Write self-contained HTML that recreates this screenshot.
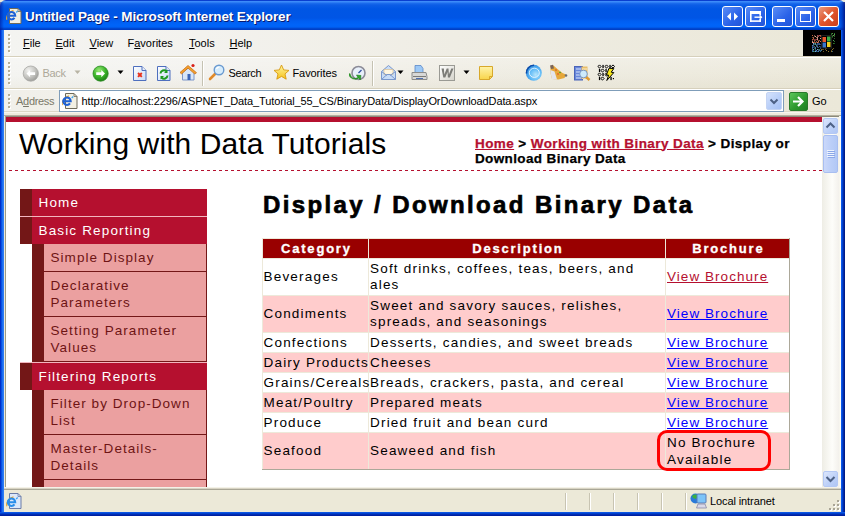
<!DOCTYPE html>
<html><head><meta charset="utf-8">
<style>
*{margin:0;padding:0;box-sizing:border-box}
html,body{width:845px;height:516px;overflow:hidden}
body{position:relative;background:#ECE9D8;font-family:"Liberation Sans",sans-serif;}
.a{position:absolute}
.t{position:absolute;line-height:1;white-space:nowrap}
.v{font-size:13px;letter-spacing:1.2px}
.tah{font-size:11px;color:#000}
</style></head><body>

<!-- ===== Title bar ===== -->
<div class="a" style="left:0;top:0;width:845px;height:30px;border-radius:6px 6px 0 0;background:linear-gradient(#0A3FD0 0px,#0A3FD0 1px,#3D8CFB 1px,#3B8AF8 2px,#1E6EEE 3px,#0C5DE6 5px,#0056E4 9px,#0055E5 18px,#005EF2 21px,#0064F9 25px,#0062F6 27px,#0050DC 28px,#003FC6 29px,#003FC6 30px)"></div>
<div class="a" style="left:839px;top:2px;width:6px;height:28px;background:linear-gradient(90deg,rgba(0,40,180,0),rgba(0,40,170,0.5) 3px,rgba(0,20,130,0.9))"></div>
<div class="a" style="left:0px;top:2px;width:4px;height:28px;background:linear-gradient(90deg,rgba(0,20,150,0.6),rgba(0,40,180,0))"></div>
<!-- title icon -->
<svg class="a" style="left:6px;top:8px" width="20" height="18" viewBox="0 0 20 18">
 <path d="M3.5 0.5h8.5l3 3v12h-11.5z" fill="#F2F0E4" stroke="#6E6A5A" stroke-width="1"/>
 <path d="M12 0.5v3h3" fill="none" stroke="#6E6A5A" stroke-width="0.8"/>
 <path d="M0.9000000000000004 11.7C-0.09999999999999964 8.5 2.5 3.5 7.5 2.3" fill="none" stroke="#E8A830" stroke-width="1.2"/>
 <path d="M2.0999999999999996 7.7H9.2A3.7 3.7 0 1 0 8.5 9.9" fill="none" stroke="#1E62D6" stroke-width="2.1"/>
 <path d="M10.2 4.5l1.5-1.5" stroke="#3AA0F0" stroke-width="1.2"/>
</svg>
<div class="t" style="left:25px;top:10px;font-size:13.5px;font-weight:bold;color:#fff;text-shadow:1px 1px 0 #0A1A6E;letter-spacing:-0.12px">Untitled Page - Microsoft Internet Explorer</div>
<!-- caption buttons -->
<div class="a" style="left:722px;top:6px;width:21px;height:21px;border:1px solid #fff;border-radius:3px;background:linear-gradient(135deg,#5A8CF6,#2A62E8 60%,#2255D8)"></div>
<svg class="a" style="left:722px;top:6px" width="21" height="21"><path d="M5 10.5l4-4v8zM16 10.5l-4-4v8z" fill="#fff"/></svg>
<div class="a" style="left:745px;top:6px;width:21px;height:21px;border:1px solid #fff;border-radius:3px;background:linear-gradient(135deg,#5A8CF6,#2A62E8 60%,#2255D8)"></div>
<svg class="a" style="left:745px;top:6px" width="21" height="21"><g fill="#fff"><rect x="5" y="5" width="11" height="3"/><rect x="5" y="5" width="1.6" height="11"/><rect x="5" y="14.3" width="11" height="1.6"/><rect x="14.4" y="5" width="1.6" height="4.3"/><rect x="14.4" y="13" width="1.6" height="3"/><rect x="9.5" y="10.5" width="6" height="1.4"/><path d="M14.6 8.6L17.4 11.2L14.6 13.8z"/></g></svg>
<div class="a" style="left:772px;top:6px;width:21px;height:21px;border:1px solid #fff;border-radius:3px;background:linear-gradient(135deg,#5A8CF6,#2A62E8 60%,#2255D8)"></div>
<div class="a" style="left:777px;top:19px;width:7.5px;height:3px;background:#fff"></div>
<div class="a" style="left:795px;top:6px;width:21px;height:21px;border:1px solid #fff;border-radius:3px;background:linear-gradient(135deg,#5A8CF6,#2A62E8 60%,#2255D8)"></div>
<div class="a" style="left:800px;top:11px;width:11px;height:11px;border:1px solid #fff;border-top-width:3px"></div>
<div class="a" style="left:818px;top:6px;width:21px;height:21px;border:1px solid #fff;border-radius:3px;background:linear-gradient(135deg,#E89A7E,#E0552C 50%,#C83E1C)"></div>
<svg class="a" style="left:818px;top:6px" width="21" height="21"><path d="M6 6l9 9M15 6l-9 9" stroke="#fff" stroke-width="2.2"/></svg>

<!-- ===== frame borders ===== -->
<div class="a" style="left:0;top:30px;width:4px;height:486px;background:linear-gradient(90deg,#0019B8,#0045DD 1px,#0D5EEA 2px,#2E7CF5 3px)"></div>
<div class="a" style="left:841px;top:30px;width:4px;height:486px;background:linear-gradient(90deg,#1462F2,#0050E4 1px,#0032B8 2px,#00147A 4px)"></div>
<div class="a" style="left:0;top:512px;width:845px;height:4px;background:linear-gradient(#1664EC,#0048DA 1px,#0038C0 2px,#0020A0 3px)"></div>

<!-- ===== Menu bar ===== -->
<div class="a" style="left:4px;top:30px;width:799px;height:26px;background:linear-gradient(90deg,#F4F4F1 0px,#F3F2EE 200px,#EFEDE4 450px,#EBE8D9 799px)"></div>
<div class="a" style="left:803px;top:30px;width:38px;height:26px;background:#000"></div>
<svg class="a" style="left:803px;top:30px" width="38" height="26" viewBox="0 0 38 26">
<rect x="9" y="5" width="1" height="1" fill="#D07040" opacity="0.92"/><rect x="9" y="7" width="1" height="1" fill="#D07040" opacity="0.55"/><rect x="9" y="9" width="1" height="1" fill="#D07040" opacity="0.89"/><rect x="9" y="10" width="1" height="1" fill="#C05050" opacity="0.53"/><rect x="9" y="11" width="1" height="1" fill="#E0C0A0" opacity="0.80"/><rect x="9" y="12" width="1" height="1" fill="#F0A0A0" opacity="0.98"/><rect x="9" y="15" width="1" height="1" fill="#5080D0" opacity="0.91"/><rect x="9" y="16" width="1" height="1" fill="#5080D0" opacity="0.55"/><rect x="9" y="17" width="1" height="1" fill="#5080D0" opacity="0.88"/><rect x="9" y="18" width="1" height="1" fill="#3060A0" opacity="0.91"/><rect x="9" y="19" width="1" height="1" fill="#50B080" opacity="0.61"/><rect x="9" y="20" width="1" height="1" fill="#5080D0" opacity="0.70"/><rect x="9" y="21" width="1" height="1" fill="#3060A0" opacity="1.00"/><rect x="10" y="7" width="1" height="1" fill="#E08060" opacity="0.73"/><rect x="10" y="8" width="1" height="1" fill="#D07040" opacity="0.87"/><rect x="10" y="9" width="1" height="1" fill="#C05050" opacity="0.66"/><rect x="10" y="12" width="1" height="1" fill="#E08060" opacity="0.96"/><rect x="10" y="13" width="1" height="1" fill="#80B0E0" opacity="0.99"/><rect x="10" y="14" width="1" height="1" fill="#5080D0" opacity="0.76"/><rect x="10" y="15" width="1" height="1" fill="#50B080" opacity="0.60"/><rect x="10" y="16" width="1" height="1" fill="#6070C0" opacity="0.46"/><rect x="10" y="17" width="1" height="1" fill="#5080D0" opacity="0.52"/><rect x="10" y="19" width="1" height="1" fill="#80B0E0" opacity="0.89"/><rect x="10" y="20" width="1" height="1" fill="#3060A0" opacity="0.55"/><rect x="10" y="21" width="1" height="1" fill="#50B080" opacity="0.87"/><rect x="11" y="5" width="1" height="1" fill="#F0A0A0" opacity="0.51"/><rect x="11" y="6" width="1" height="1" fill="#E08060" opacity="0.45"/><rect x="11" y="9" width="1" height="1" fill="#D06070" opacity="0.57"/><rect x="11" y="10" width="1" height="1" fill="#D07040" opacity="0.80"/><rect x="11" y="11" width="1" height="1" fill="#E08060" opacity="0.57"/><rect x="11" y="12" width="1" height="1" fill="#D07040" opacity="0.63"/><rect x="11" y="13" width="1" height="1" fill="#5080D0" opacity="0.49"/><rect x="11" y="14" width="1" height="1" fill="#50B080" opacity="0.58"/><rect x="11" y="16" width="1" height="1" fill="#80B0E0" opacity="0.52"/><rect x="11" y="17" width="1" height="1" fill="#3060A0" opacity="0.52"/><rect x="11" y="18" width="1" height="1" fill="#50B080" opacity="0.53"/><rect x="11" y="21" width="1" height="1" fill="#40A0B0" opacity="0.54"/><rect x="12" y="6" width="1" height="1" fill="#E0C0A0" opacity="0.97"/><rect x="12" y="9" width="1" height="1" fill="#D06070" opacity="0.51"/><rect x="12" y="10" width="1" height="1" fill="#C05050" opacity="0.58"/><rect x="12" y="12" width="1" height="1" fill="#D07040" opacity="0.72"/><rect x="12" y="13" width="1" height="1" fill="#50B080" opacity="0.99"/><rect x="12" y="14" width="1" height="1" fill="#80B0E0" opacity="0.76"/><rect x="12" y="17" width="1" height="1" fill="#40A0B0" opacity="0.86"/><rect x="12" y="18" width="1" height="1" fill="#80B0E0" opacity="0.70"/><rect x="12" y="19" width="1" height="1" fill="#40A0B0" opacity="0.61"/><rect x="12" y="20" width="1" height="1" fill="#40A0B0" opacity="0.50"/><rect x="12" y="21" width="1" height="1" fill="#80B0E0" opacity="0.99"/><rect x="13" y="7" width="1" height="1" fill="#E08060" opacity="0.77"/><rect x="13" y="9" width="1" height="1" fill="#C05050" opacity="0.84"/><rect x="13" y="11" width="1" height="1" fill="#E0C0A0" opacity="0.49"/><rect x="13" y="12" width="1" height="1" fill="#C05050" opacity="0.63"/><rect x="13" y="14" width="1" height="1" fill="#3060A0" opacity="0.65"/><rect x="13" y="15" width="1" height="1" fill="#50B080" opacity="0.86"/><rect x="13" y="16" width="1" height="1" fill="#6070C0" opacity="0.64"/><rect x="13" y="20" width="1" height="1" fill="#5080D0" opacity="0.92"/><rect x="13" y="21" width="1" height="1" fill="#3060A0" opacity="0.81"/><rect x="14" y="5" width="1" height="1" fill="#D06070" opacity="0.78"/><rect x="14" y="6" width="1" height="1" fill="#E0C0A0" opacity="0.51"/><rect x="14" y="7" width="1" height="1" fill="#F0A0A0" opacity="0.85"/><rect x="14" y="8" width="1" height="1" fill="#E0C0A0" opacity="0.83"/><rect x="14" y="9" width="1" height="1" fill="#F0A0A0" opacity="0.91"/><rect x="14" y="10" width="1" height="1" fill="#D07040" opacity="0.47"/><rect x="14" y="12" width="1" height="1" fill="#E08060" opacity="0.98"/><rect x="14" y="13" width="1" height="1" fill="#3060A0" opacity="0.81"/><rect x="14" y="14" width="1" height="1" fill="#5080D0" opacity="0.65"/><rect x="14" y="15" width="1" height="1" fill="#3060A0" opacity="0.56"/><rect x="14" y="16" width="1" height="1" fill="#6070C0" opacity="0.81"/><rect x="14" y="17" width="1" height="1" fill="#40A0B0" opacity="0.63"/><rect x="14" y="19" width="1" height="1" fill="#80B0E0" opacity="0.89"/><rect x="14" y="21" width="1" height="1" fill="#40A0B0" opacity="0.66"/><rect x="15" y="5" width="1" height="1" fill="#C05050" opacity="0.57"/><rect x="15" y="6" width="1" height="1" fill="#C05050" opacity="0.91"/><rect x="15" y="10" width="1" height="1" fill="#E08060" opacity="0.51"/><rect x="15" y="11" width="1" height="1" fill="#E08060" opacity="0.91"/><rect x="15" y="12" width="1" height="1" fill="#D07040" opacity="0.72"/><rect x="15" y="13" width="1" height="1" fill="#3060A0" opacity="0.70"/><rect x="15" y="14" width="1" height="1" fill="#5080D0" opacity="0.60"/><rect x="15" y="17" width="1" height="1" fill="#6070C0" opacity="0.62"/><rect x="15" y="19" width="1" height="1" fill="#40A0B0" opacity="0.67"/><rect x="15" y="20" width="1" height="1" fill="#6070C0" opacity="0.58"/><rect x="15" y="21" width="1" height="1" fill="#5080D0" opacity="0.99"/><rect x="16" y="5" width="1" height="1" fill="#D06070" opacity="0.80"/><rect x="16" y="10" width="1" height="1" fill="#F0A0A0" opacity="0.59"/><rect x="16" y="13" width="1" height="1" fill="#5080D0" opacity="0.55"/><rect x="16" y="14" width="1" height="1" fill="#6070C0" opacity="0.75"/><rect x="16" y="16" width="1" height="1" fill="#40A0B0" opacity="0.67"/><rect x="16" y="19" width="1" height="1" fill="#50B080" opacity="0.66"/><rect x="16" y="20" width="1" height="1" fill="#40A0B0" opacity="0.79"/><rect x="17" y="5" width="1" height="1" fill="#D07040" opacity="0.81"/><rect x="17" y="6" width="1" height="1" fill="#C05050" opacity="0.71"/><rect x="17" y="8" width="1" height="1" fill="#E0C0A0" opacity="0.93"/><rect x="17" y="11" width="1" height="1" fill="#E08060" opacity="0.94"/><rect x="17" y="14" width="1" height="1" fill="#6070C0" opacity="0.59"/><rect x="17" y="16" width="1" height="1" fill="#3060A0" opacity="0.50"/><rect x="17" y="17" width="1" height="1" fill="#3060A0" opacity="0.68"/><rect x="17" y="18" width="1" height="1" fill="#5080D0" opacity="0.57"/><rect x="17" y="20" width="1" height="1" fill="#5080D0" opacity="0.55"/><rect x="17" y="21" width="1" height="1" fill="#40A0B0" opacity="0.71"/><rect x="27" y="7" width="1" height="1" fill="#80C060" opacity="0.69"/><rect x="27" y="10" width="1" height="1" fill="#308830" opacity="0.82"/><rect x="27" y="12" width="1" height="1" fill="#308830" opacity="0.56"/><rect x="27" y="13" width="1" height="1" fill="#60C060" opacity="0.55"/><rect x="28" y="3" width="1" height="1" fill="#308830" opacity="0.69"/><rect x="28" y="4" width="1" height="1" fill="#40B040" opacity="0.65"/><rect x="28" y="6" width="1" height="1" fill="#40B040" opacity="0.66"/><rect x="28" y="7" width="1" height="1" fill="#40B040" opacity="0.65"/><rect x="28" y="9" width="1" height="1" fill="#80C060" opacity="0.61"/><rect x="28" y="12" width="1" height="1" fill="#80C060" opacity="0.65"/><rect x="28" y="13" width="1" height="1" fill="#80C060" opacity="0.66"/><rect x="29" y="3" width="1" height="1" fill="#80C060" opacity="0.71"/><rect x="29" y="5" width="1" height="1" fill="#40B040" opacity="0.42"/><rect x="29" y="6" width="1" height="1" fill="#40B040" opacity="0.74"/><rect x="29" y="7" width="1" height="1" fill="#308830" opacity="0.52"/><rect x="30" y="5" width="1" height="1" fill="#80C060" opacity="0.81"/><rect x="30" y="10" width="1" height="1" fill="#60C060" opacity="0.83"/><rect x="30" y="13" width="1" height="1" fill="#308830" opacity="0.85"/><rect x="31" y="3" width="1" height="1" fill="#308830" opacity="0.85"/><rect x="31" y="4" width="1" height="1" fill="#60C060" opacity="0.84"/><rect x="31" y="5" width="1" height="1" fill="#60C060" opacity="0.47"/><rect x="31" y="6" width="1" height="1" fill="#80C060" opacity="0.45"/><rect x="31" y="8" width="1" height="1" fill="#60C060" opacity="0.50"/><rect x="31" y="11" width="1" height="1" fill="#308830" opacity="0.86"/><rect x="31" y="13" width="1" height="1" fill="#308830" opacity="0.65"/><rect x="18" y="19" width="1" height="1" fill="#C0A040" opacity="0.64"/><rect x="18" y="20" width="1" height="1" fill="#60A0C0" opacity="0.71"/><rect x="19" y="19" width="1" height="1" fill="#C0A040" opacity="0.50"/><rect x="20" y="19" width="1" height="1" fill="#C0A040" opacity="0.47"/><rect x="20" y="21" width="1" height="1" fill="#C0A040" opacity="0.56"/><rect x="22" y="18" width="1" height="1" fill="#60A0C0" opacity="0.42"/><rect x="22" y="19" width="1" height="1" fill="#A08030" opacity="0.63"/><rect x="23" y="18" width="1" height="1" fill="#C0A040" opacity="0.45"/><rect x="23" y="20" width="1" height="1" fill="#C0A040" opacity="0.80"/><rect x="25" y="21" width="1" height="1" fill="#C0A040" opacity="0.77"/><rect x="28" y="20" width="1" height="1" fill="#A08030" opacity="0.55"/><rect x="28" y="21" width="1" height="1" fill="#A08030" opacity="0.90"/><rect x="29" y="19" width="1" height="1" fill="#A08030" opacity="0.87"/><rect x="29" y="21" width="1" height="1" fill="#60A0C0" opacity="0.60"/><rect x="30" y="18" width="1" height="1" fill="#C0A040" opacity="0.59"/>
 <rect x="18.5" y="5.5" width="10" height="12.5" fill="#000" stroke="#202020" stroke-width="1"/>
 <rect x="19.5" y="7" width="3.5" height="5" fill="#E8582A"/>
 <rect x="24" y="6.5" width="3.5" height="5" fill="#3CB04A"/>
 <rect x="19.5" y="12.5" width="3.5" height="5" fill="#3A78D0"/>
 <rect x="24" y="12" width="3.5" height="5" fill="#F0D020"/>
</svg>
<div class="a" style="left:4px;top:56px;width:837px;height:1px;background:#D6D0BC"></div>
<div class="a" style="left:4px;top:57px;width:837px;height:1px;background:#FFFFFF;z-index:1"></div>


<!-- ===== Toolbar ===== -->
<div class="a" style="left:4px;top:57px;width:837px;height:31px;background:linear-gradient(rgba(255,255,255,0.25),rgba(255,255,255,0) 60%,rgba(200,190,160,0.12)),linear-gradient(90deg,#F4F4F1 0px,#F3F2EE 200px,#EFEDE4 450px,#EBE8D9 837px)"></div>
<div class="a" style="left:4px;top:88px;width:837px;height:1px;background:#D6D0BC"></div>
<div class="a" style="left:4px;top:89px;width:837px;height:1px;background:#FFFFFF;z-index:1"></div>

<!-- ===== Address bar ===== -->
<div class="a" style="left:4px;top:89px;width:837px;height:22px;background:linear-gradient(90deg,#F1F0EA 0px,#F0EFE8 200px,#EEECE2 450px,#EBE8D9 837px)"></div>
<div class="a" style="left:4px;top:111px;width:837px;height:1px;background:#DCD7C6"></div>
<div class="a" style="left:4px;top:112px;width:837px;height:1px;background:#F7F5EE"></div>
<div class="a" style="left:4px;top:113px;width:837px;height:2px;background:#EEEBDD"></div>
<div class="a" style="left:4px;top:115px;width:837px;height:1px;background:#B4B0A0"></div>

<!-- ===== Page frame ===== -->
<div class="a" style="left:5px;top:116px;width:836px;height:1px;background:#8C8A7A"></div>
<div class="a" style="left:5px;top:116px;width:1px;height:372px;background:#9D9A88"></div>
<div class="a" style="left:6px;top:117px;width:816px;height:370px;background:#fff;overflow:hidden" id="page"></div>
<div class="a" style="left:0;top:0;width:822px;height:487px;overflow:hidden">
<div class="a" style="left:6px;top:117px;width:816px;height:5px;background:#B5102F;"></div>
<div class="t" style="left:19px;top:128.60px;font-size:30px;font-weight:400;color:#000;letter-spacing:0.1px;">Working with Data Tutorials</div>
<div class="t" style="left:475px;top:136.5px;font-size:13.5px;font-weight:700;letter-spacing:0.41px;color:#000;-webkit-text-stroke:0.25px #000"><span style="color:#B5102F;text-decoration:underline;-webkit-text-stroke-color:#B5102F">Home</span> &gt; <span style="color:#B5102F;text-decoration:underline;-webkit-text-stroke-color:#B5102F">Working with Binary Data</span> &gt; Display or</div>
<div class="t" style="left:475px;top:151.57px;font-size:13.5px;font-weight:700;color:#000;letter-spacing:0.37px;-webkit-text-stroke:0.25px #000">Download Binary Data</div>
<div class="a" style="left:9px;top:170px;width:813px;height:1px;background:repeating-linear-gradient(90deg,#B5102F 0 3px,transparent 3px 6px);"></div>
<div class="a" style="left:20px;top:189px;width:12px;height:27px;background:#731717;"></div>
<div class="a" style="left:32px;top:189px;width:175px;height:27px;background:#B5102F;"></div>
<div class="t" style="left:38.5px;top:195.57px;font-size:13.5px;font-weight:400;color:#fff;letter-spacing:1.15px;">Home</div>
<div class="a" style="left:20px;top:216px;width:187px;height:1px;background:#F2B6BE;"></div>
<div class="a" style="left:20px;top:217px;width:12px;height:27px;background:#731717;"></div>
<div class="a" style="left:32px;top:217px;width:175px;height:27px;background:#B5102F;"></div>
<div class="t" style="left:38.5px;top:223.57px;font-size:13.5px;font-weight:400;color:#fff;letter-spacing:1.15px;">Basic Reporting</div>
<div class="a" style="left:32px;top:244px;width:12px;height:28px;background:#731717;"></div>
<div class="a" style="left:44px;top:244px;width:162px;height:27px;background:#EBA0A0;"></div>
<div class="a" style="left:44px;top:271px;width:162px;height:1px;background:#731717;"></div>
<div class="a" style="left:206px;top:244px;width:1px;height:28px;background:#731717;"></div>
<div class="t" style="left:50.5px;top:250.57px;font-size:13.5px;font-weight:400;color:#6E1414;letter-spacing:1.05px;">Simple Display</div>
<div class="a" style="left:32px;top:272px;width:12px;height:45px;background:#731717;"></div>
<div class="a" style="left:44px;top:272px;width:162px;height:44px;background:#EBA0A0;"></div>
<div class="a" style="left:44px;top:316px;width:162px;height:1px;background:#731717;"></div>
<div class="a" style="left:206px;top:272px;width:1px;height:45px;background:#731717;"></div>
<div class="t" style="left:50.5px;top:278.57px;font-size:13.5px;font-weight:400;color:#6E1414;letter-spacing:1.05px;">Declarative</div>
<div class="t" style="left:50.5px;top:295.57px;font-size:13.5px;font-weight:400;color:#6E1414;letter-spacing:1.05px;">Parameters</div>
<div class="a" style="left:32px;top:317px;width:12px;height:45px;background:#731717;"></div>
<div class="a" style="left:44px;top:317px;width:162px;height:44px;background:#EBA0A0;"></div>
<div class="a" style="left:44px;top:361px;width:162px;height:1px;background:#731717;"></div>
<div class="a" style="left:206px;top:317px;width:1px;height:45px;background:#731717;"></div>
<div class="t" style="left:50.5px;top:323.57px;font-size:13.5px;font-weight:400;color:#6E1414;letter-spacing:1.05px;">Setting Parameter</div>
<div class="t" style="left:50.5px;top:340.57px;font-size:13.5px;font-weight:400;color:#6E1414;letter-spacing:1.05px;">Values</div>
<div class="a" style="left:20px;top:362px;width:187px;height:1px;background:#F2B6BE;"></div>
<div class="a" style="left:20px;top:363px;width:12px;height:27px;background:#731717;"></div>
<div class="a" style="left:32px;top:363px;width:175px;height:27px;background:#B5102F;"></div>
<div class="t" style="left:38.5px;top:369.57px;font-size:13.5px;font-weight:400;color:#fff;letter-spacing:1.15px;">Filtering Reports</div>
<div class="a" style="left:32px;top:390px;width:12px;height:45px;background:#731717;"></div>
<div class="a" style="left:44px;top:390px;width:162px;height:44px;background:#EBA0A0;"></div>
<div class="a" style="left:44px;top:434px;width:162px;height:1px;background:#731717;"></div>
<div class="a" style="left:206px;top:390px;width:1px;height:45px;background:#731717;"></div>
<div class="t" style="left:50.5px;top:396.57px;font-size:13.5px;font-weight:400;color:#6E1414;letter-spacing:1.05px;">Filter by Drop-Down</div>
<div class="t" style="left:50.5px;top:413.57px;font-size:13.5px;font-weight:400;color:#6E1414;letter-spacing:1.05px;">List</div>
<div class="a" style="left:32px;top:435px;width:12px;height:45px;background:#731717;"></div>
<div class="a" style="left:44px;top:435px;width:162px;height:44px;background:#EBA0A0;"></div>
<div class="a" style="left:44px;top:479px;width:162px;height:1px;background:#731717;"></div>
<div class="a" style="left:206px;top:435px;width:1px;height:45px;background:#731717;"></div>
<div class="t" style="left:50.5px;top:441.57px;font-size:13.5px;font-weight:400;color:#6E1414;letter-spacing:1.05px;">Master-Details-</div>
<div class="t" style="left:50.5px;top:458.57px;font-size:13.5px;font-weight:400;color:#6E1414;letter-spacing:1.05px;">Details</div>
<div class="a" style="left:32px;top:480px;width:12px;height:45px;background:#731717;"></div>
<div class="a" style="left:44px;top:480px;width:162px;height:44px;background:#EBA0A0;"></div>
<div class="a" style="left:44px;top:524px;width:162px;height:1px;background:#731717;"></div>
<div class="a" style="left:206px;top:480px;width:1px;height:45px;background:#731717;"></div>
<div class="t" style="left:50.5px;top:486.57px;font-size:13.5px;font-weight:400;color:#6E1414;letter-spacing:1.05px;">Master-Details-</div>
<div class="t" style="left:50.5px;top:503.57px;font-size:13.5px;font-weight:400;color:#6E1414;letter-spacing:1.05px;">Details</div>
<div class="t" style="left:263px;top:192.68px;font-size:24px;font-weight:700;color:#000;letter-spacing:2.38px;-webkit-text-stroke:0.7px #000">Display / Download Binary Data</div>
<div class="a" style="left:262px;top:238px;width:528px;height:232px;background:#EDE9DA;"></div>
<div class="a" style="left:263px;top:239px;width:105px;height:19px;background:#990000;"></div>
<div class="a" style="left:369px;top:239px;width:296px;height:19px;background:#990000;"></div>
<div class="a" style="left:666px;top:239px;width:123px;height:19px;background:#990000;"></div>
<div class="a" style="left:263px;top:259px;width:105px;height:36px;background:#fff;"></div>
<div class="a" style="left:369px;top:259px;width:296px;height:36px;background:#fff;"></div>
<div class="a" style="left:666px;top:259px;width:123px;height:36px;background:#fff;"></div>
<div class="a" style="left:263px;top:296px;width:105px;height:36px;background:#FFCCCC;"></div>
<div class="a" style="left:369px;top:296px;width:296px;height:36px;background:#FFCCCC;"></div>
<div class="a" style="left:666px;top:296px;width:123px;height:36px;background:#FFCCCC;"></div>
<div class="a" style="left:263px;top:333px;width:105px;height:19px;background:#fff;"></div>
<div class="a" style="left:369px;top:333px;width:296px;height:19px;background:#fff;"></div>
<div class="a" style="left:666px;top:333px;width:123px;height:19px;background:#fff;"></div>
<div class="a" style="left:263px;top:353px;width:105px;height:19px;background:#FFCCCC;"></div>
<div class="a" style="left:369px;top:353px;width:296px;height:19px;background:#FFCCCC;"></div>
<div class="a" style="left:666px;top:353px;width:123px;height:19px;background:#FFCCCC;"></div>
<div class="a" style="left:263px;top:373px;width:105px;height:19px;background:#fff;"></div>
<div class="a" style="left:369px;top:373px;width:296px;height:19px;background:#fff;"></div>
<div class="a" style="left:666px;top:373px;width:123px;height:19px;background:#fff;"></div>
<div class="a" style="left:263px;top:393px;width:105px;height:19px;background:#FFCCCC;"></div>
<div class="a" style="left:369px;top:393px;width:296px;height:19px;background:#FFCCCC;"></div>
<div class="a" style="left:666px;top:393px;width:123px;height:19px;background:#FFCCCC;"></div>
<div class="a" style="left:263px;top:413px;width:105px;height:19px;background:#fff;"></div>
<div class="a" style="left:369px;top:413px;width:296px;height:19px;background:#fff;"></div>
<div class="a" style="left:666px;top:413px;width:123px;height:19px;background:#fff;"></div>
<div class="a" style="left:263px;top:433px;width:105px;height:36px;background:#FFCCCC;"></div>
<div class="a" style="left:369px;top:433px;width:296px;height:36px;background:#FFCCCC;"></div>
<div class="a" style="left:666px;top:433px;width:123px;height:36px;background:#FFCCCC;"></div>
<div class="a" style="left:789px;top:238px;width:1px;height:232px;background:#ACA899;"></div>
<div class="a" style="left:262px;top:469px;width:528px;height:1px;background:#ACA899;"></div>
<div class="t" style="left:263px;width:105px;text-align:center;top:242.00px;font-size:13px;font-weight:700;color:#fff;letter-spacing:1.8px;text-indent:1.8px;-webkit-text-stroke:0.3px #fff">Category</div>
<div class="t" style="left:369px;width:296px;text-align:center;top:242.00px;font-size:13px;font-weight:700;color:#fff;letter-spacing:1.8px;text-indent:1.8px;-webkit-text-stroke:0.3px #fff">Description</div>
<div class="t" style="left:666px;width:123px;text-align:center;top:242.00px;font-size:13px;font-weight:700;color:#fff;letter-spacing:1.8px;text-indent:1.8px;-webkit-text-stroke:0.3px #fff">Brochure</div>
<div class="t" style="left:263.5px;top:270.07px;font-size:13.5px;font-weight:400;color:#000;letter-spacing:1.2px;">Beverages</div>
<div class="t" style="left:370px;top:261.57px;font-size:13.5px;font-weight:400;color:#000;letter-spacing:1.2px;">Soft drinks, coffees, teas, beers, and</div>
<div class="t" style="left:370px;top:277.57px;font-size:13.5px;font-weight:400;color:#000;letter-spacing:1.2px;">ales</div>
<div class="t" style="left:667px;top:270.07px;font-size:13.5px;font-weight:400;color:#B5102F;letter-spacing:1.05px;text-decoration:underline">View Brochure</div>
<div class="t" style="left:263.5px;top:307.07px;font-size:13.5px;font-weight:400;color:#000;letter-spacing:1.2px;">Condiments</div>
<div class="t" style="left:370px;top:298.57px;font-size:13.5px;font-weight:400;color:#000;letter-spacing:1.2px;">Sweet and savory sauces, relishes,</div>
<div class="t" style="left:370px;top:314.57px;font-size:13.5px;font-weight:400;color:#000;letter-spacing:1.2px;">spreads, and seasonings</div>
<div class="t" style="left:667px;top:307.07px;font-size:13.5px;font-weight:400;color:#0000FF;letter-spacing:1.05px;text-decoration:underline">View Brochure</div>
<div class="t" style="left:263.5px;top:335.57px;font-size:13.5px;font-weight:400;color:#000;letter-spacing:1.2px;">Confections</div>
<div class="t" style="left:370px;top:335.57px;font-size:13.5px;font-weight:400;color:#000;letter-spacing:1.2px;">Desserts, candies, and sweet breads</div>
<div class="t" style="left:667px;top:335.57px;font-size:13.5px;font-weight:400;color:#0000FF;letter-spacing:1.05px;text-decoration:underline">View Brochure</div>
<div class="t" style="left:263.5px;top:355.57px;font-size:13.5px;font-weight:400;color:#000;letter-spacing:1.2px;">Dairy Products</div>
<div class="t" style="left:370px;top:355.57px;font-size:13.5px;font-weight:400;color:#000;letter-spacing:1.2px;">Cheeses</div>
<div class="t" style="left:667px;top:355.57px;font-size:13.5px;font-weight:400;color:#0000FF;letter-spacing:1.05px;text-decoration:underline">View Brochure</div>
<div class="t" style="left:263.5px;top:375.57px;font-size:13.5px;font-weight:400;color:#000;letter-spacing:1.2px;">Grains/Cereals</div>
<div class="t" style="left:370px;top:375.57px;font-size:13.5px;font-weight:400;color:#000;letter-spacing:1.2px;">Breads, crackers, pasta, and cereal</div>
<div class="t" style="left:667px;top:375.57px;font-size:13.5px;font-weight:400;color:#0000FF;letter-spacing:1.05px;text-decoration:underline">View Brochure</div>
<div class="t" style="left:263.5px;top:395.57px;font-size:13.5px;font-weight:400;color:#000;letter-spacing:1.2px;">Meat/Poultry</div>
<div class="t" style="left:370px;top:395.57px;font-size:13.5px;font-weight:400;color:#000;letter-spacing:1.2px;">Prepared meats</div>
<div class="t" style="left:667px;top:395.57px;font-size:13.5px;font-weight:400;color:#0000FF;letter-spacing:1.05px;text-decoration:underline">View Brochure</div>
<div class="t" style="left:263.5px;top:415.57px;font-size:13.5px;font-weight:400;color:#000;letter-spacing:1.2px;">Produce</div>
<div class="t" style="left:370px;top:415.57px;font-size:13.5px;font-weight:400;color:#000;letter-spacing:1.2px;">Dried fruit and bean curd</div>
<div class="t" style="left:667px;top:415.57px;font-size:13.5px;font-weight:400;color:#0000FF;letter-spacing:1.05px;text-decoration:underline">View Brochure</div>
<div class="t" style="left:263.5px;top:444.07px;font-size:13.5px;font-weight:400;color:#000;letter-spacing:1.2px;">Seafood</div>
<div class="t" style="left:370px;top:444.07px;font-size:13.5px;font-weight:400;color:#000;letter-spacing:1.2px;">Seaweed and fish</div>
<div class="t" style="left:667px;top:435.57px;font-size:13.5px;font-weight:400;color:#000;letter-spacing:1.2px;">No Brochure</div>
<div class="t" style="left:667px;top:452.57px;font-size:13.5px;font-weight:400;color:#000;letter-spacing:1.2px;">Available</div>
<div class="a" style="left:657px;top:430px;width:114px;height:41px;border:3px solid #FF0000;border-radius:10px"></div>
</div>
<!-- ===== Status bar ===== -->
<div class="a" style="left:4px;top:487px;width:837px;height:1px;background:#F4F2E8"></div>
<div class="a" style="left:4px;top:488px;width:837px;height:1px;background:#D8D4C4"></div>
<div class="a" style="left:4px;top:489px;width:837px;height:1px;background:#A9A696"></div>
<div class="a" style="left:4px;top:490px;width:837px;height:22px;background:#ECE9D8"></div>


<!-- grips -->
<svg class="a" style="left:8px;top:34px" width="4" height="20"><g fill="#FFFFFF"><rect x="1" y="1" width="2" height="2"/><rect x="1" y="5" width="2" height="2"/><rect x="1" y="9" width="2" height="2"/><rect x="1" y="13" width="2" height="2"/><rect x="1" y="17" width="2" height="2"/></g><g fill="#B5AE96"><rect x="0" y="0" width="2" height="2"/><rect x="0" y="4" width="2" height="2"/><rect x="0" y="8" width="2" height="2"/><rect x="0" y="12" width="2" height="2"/><rect x="0" y="16" width="2" height="2"/></g></svg>
<svg class="a" style="left:8px;top:62px" width="4" height="24"><g fill="#FFFFFF"><rect x="1" y="1" width="2" height="2"/><rect x="1" y="5" width="2" height="2"/><rect x="1" y="9" width="2" height="2"/><rect x="1" y="13" width="2" height="2"/><rect x="1" y="17" width="2" height="2"/><rect x="1" y="21" width="2" height="2"/></g><g fill="#B5AE96"><rect x="0" y="0" width="2" height="2"/><rect x="0" y="4" width="2" height="2"/><rect x="0" y="8" width="2" height="2"/><rect x="0" y="12" width="2" height="2"/><rect x="0" y="16" width="2" height="2"/><rect x="0" y="20" width="2" height="2"/></g></svg>
<svg class="a" style="left:8px;top:94px" width="4" height="16"><g fill="#FFFFFF"><rect x="1" y="1" width="2" height="2"/><rect x="1" y="5" width="2" height="2"/><rect x="1" y="9" width="2" height="2"/><rect x="1" y="13" width="2" height="2"/></g><g fill="#B5AE96"><rect x="0" y="0" width="2" height="2"/><rect x="0" y="4" width="2" height="2"/><rect x="0" y="8" width="2" height="2"/><rect x="0" y="12" width="2" height="2"/></g></svg>

<!-- menu -->
<div class="t tah" style="left:23px;top:37.5px"><u>F</u>ile</div>
<div class="t tah" style="left:55.5px;top:37.5px"><u>E</u>dit</div>
<div class="t tah" style="left:89.5px;top:37.5px"><u>V</u>iew</div>
<div class="t tah" style="left:127.5px;top:37.5px">F<u>a</u>vorites</div>
<div class="t tah" style="left:189px;top:37.5px"><u>T</u>ools</div>
<div class="t tah" style="left:229.5px;top:37.5px"><u>H</u>elp</div>

<!-- toolbar -->
<svg class="a" style="left:22px;top:65px" width="18" height="18" viewBox="0 0 18 18">
 <defs><radialGradient id="gb" cx="35%" cy="30%" r="75%"><stop offset="0" stop-color="#F2F2F0"/><stop offset="0.6" stop-color="#C4C4C0"/><stop offset="1" stop-color="#9A9A96"/></radialGradient></defs>
 <circle cx="8.8" cy="8.6" r="7.6" fill="url(#gb)" stroke="#A8A8A4" stroke-width="0.8"/>
 <path d="M4.5 8.6l3.6-3.6v2.3h5v2.6h-5v2.3z" fill="#fff"/>
</svg>
<div class="t tah" style="left:42.5px;top:67.7px;color:#ACA899;letter-spacing:-0.3px">Back</div>
<svg class="a" style="left:74px;top:70px" width="8" height="5"><path d="M0.5 0.5h6l-3 3.5z" fill="#B8B4A4"/></svg>
<svg class="a" style="left:92px;top:65px" width="18" height="18" viewBox="0 0 18 18">
 <defs><radialGradient id="gg" cx="40%" cy="30%" r="75%"><stop offset="0" stop-color="#9CEB7A"/><stop offset="0.55" stop-color="#3BB52A"/><stop offset="1" stop-color="#1A7A14"/></radialGradient></defs>
 <circle cx="8.6" cy="8.6" r="7.6" fill="url(#gg)" stroke="#2B8A22" stroke-width="0.8"/>
 <path d="M13 8.6L9.3 5v2.3H4.2v2.6h5.1v2.3z" fill="#fff"/>
</svg>
<svg class="a" style="left:117px;top:70px" width="8" height="5"><path d="M0.5 0.5h6l-3 3.5z" fill="#000"/></svg>
<!-- stop -->
<svg class="a" style="left:132px;top:65px" width="16" height="17" viewBox="0 0 16 17">
 <defs><linearGradient id="doc" x1="0" y1="0" x2="1" y2="1"><stop offset="0" stop-color="#FFFFFF"/><stop offset="1" stop-color="#C9DAF6"/></linearGradient></defs>
 <path d="M1.5 1.5h8.5l4 4v10H1.5z" fill="url(#doc)" stroke="#4E6FBE" stroke-width="1"/>
 <path d="M10 1.5v4h4" fill="#E8EEF8" stroke="#4E6FBE" stroke-width="1"/>
 <path d="M6 8l3.8 3.8M9.8 8l-3.8 3.8" stroke="#E8321C" stroke-width="1.9"/>
</svg>
<!-- refresh -->
<svg class="a" style="left:156px;top:65px" width="16" height="17" viewBox="0 0 16 17">
 <path d="M1.5 1.5h8.5l4 4v10H1.5z" fill="url(#doc)" stroke="#4E6FBE" stroke-width="1"/>
 <path d="M10 1.5v4h4" fill="#E8EEF8" stroke="#4E6FBE" stroke-width="1"/>
 <path d="M4.5 8.5a3.5 3.5 0 0 1 6-2.2M11.5 10.5a3.5 3.5 0 0 1 -6 2.2" stroke="#1E9A1E" stroke-width="2" fill="none"/>
 <path d="M11.5 4.5v3.5h-3.5zM4.5 14.5v-3.5h3.5z" fill="#1E9A1E"/>
</svg>
<!-- home -->
<svg class="a" style="left:179px;top:63px" width="19" height="19" viewBox="0 0 19 19">
 <path d="M3.5 9.5v7.5h11.5v-8.5l-5-4z" fill="#D8E6F8" stroke="#7D96C8" stroke-width="1"/>
 <path d="M1 9.5l8-7 8.5 7.2-1.6 1.4-6.9-6-6.4 5.8z" fill="#F6A02A" stroke="#C8701A" stroke-width="0.8"/>
 <circle cx="14" cy="2.5" r="1.6" fill="#D8201A"/>
 <rect x="8.5" y="11" width="3" height="6" fill="#3A64B8"/>
</svg>
<div class="a" style="left:202px;top:61px;width:1px;height:25px;background:#C5C2B2"></div>
<div class="a" style="left:203px;top:61px;width:1px;height:25px;background:#FFFFFF"></div>
<!-- search -->
<svg class="a" style="left:208px;top:64px" width="18" height="17" viewBox="0 0 18 17">
 <path d="M2 15l5-5" stroke="#E08A2A" stroke-width="2.6" stroke-linecap="round"/>
 <circle cx="11" cy="6" r="4.8" fill="#D6ECFC" stroke="#6A9AD0" stroke-width="1.4"/>
 <path d="M8.5 5a3 3 0 0 1 3-2" stroke="#fff" stroke-width="1.2" fill="none"/>
</svg>
<div class="t tah" style="left:228.5px;top:67.7px;letter-spacing:-0.35px">Search</div>
<!-- star -->
<svg class="a" style="left:273px;top:64px" width="17" height="17" viewBox="0 0 17 17">
 <defs><linearGradient id="st" x1="0" y1="0" x2="0" y2="1"><stop offset="0" stop-color="#FFF6A0"/><stop offset="1" stop-color="#F6C21A"/></linearGradient></defs>
 <path d="M8.5 1l2.2 4.9 5.3.5-4 3.5 1.2 5.3-4.7-2.8-4.7 2.8 1.2-5.3-4-3.5 5.3-.5z" fill="url(#st)" stroke="#D89A10" stroke-width="0.9" stroke-linejoin="round"/>
</svg>
<div class="t tah" style="left:292.5px;top:67.7px;letter-spacing:-0.1px">Favorites</div>
<!-- history -->
<svg class="a" style="left:349px;top:65px" width="17" height="16" viewBox="0 0 17 16">
 <circle cx="9.5" cy="8" r="6.5" fill="#E8F0FA" stroke="#8C8C98" stroke-width="1.6"/>
 <path d="M9.5 8l3-3" stroke="#3050A0" stroke-width="1.2"/>
 <path d="M11 12.5l-2 0" stroke="#D02020" stroke-width="1"/>
 <path d="M1 8.5a5 5 0 0 0 8 4l-1.5-2.5 4.5 .5-.8 4.5-1.5-2a6.5 6.5 0 0 1-10-3.5z" fill="#2EA82A" stroke="#1A7A1A" stroke-width="0.6"/>
</svg>
<div class="a" style="left:372px;top:61px;width:1px;height:25px;background:#C5C2B2"></div>
<div class="a" style="left:373px;top:61px;width:1px;height:25px;background:#FFFFFF"></div>
<!-- mail -->
<svg class="a" style="left:380px;top:64px" width="17" height="17" viewBox="0 0 17 17">
 <path d="M1.5 7.5l7-6 7 6v8h-14z" fill="#C8DCF6" stroke="#7A98CC" stroke-width="1"/>
 <path d="M4 5.5h9v5h-9z" fill="#FFF6E0" stroke="#D8B880" stroke-width="0.6"/>
 <path d="M1.5 15.5l5.5-5h3l5.5 5M1.5 7.5l5.5 4M15.5 7.5l-5.5 4" fill="none" stroke="#7A98CC" stroke-width="1"/>
</svg>
<svg class="a" style="left:397px;top:70px" width="8" height="5"><path d="M0.5 0.5h6l-3 3.5z" fill="#000"/></svg>
<!-- printer -->
<svg class="a" style="left:411px;top:64px" width="17" height="17" viewBox="0 0 17 17">
 <path d="M4 1.5h6l2 3v4h-8z" fill="#9CC8F6" stroke="#5A88C8" stroke-width="0.8"/>
 <path d="M1 8.5h14l1 4v3H1v-3z" fill="#D8D8D6" stroke="#8C8C8A" stroke-width="1"/>
 <path d="M2 12.5h13" stroke="#7A7A78" stroke-width="1"/>
 <path d="M5 14.5h7" stroke="#5070B0" stroke-width="1"/>
</svg>
<!-- word -->
<svg class="a" style="left:438px;top:64px" width="18" height="18" viewBox="0 0 18 18">
 <defs><linearGradient id="wd" x1="0" y1="0" x2="1" y2="1"><stop offset="0" stop-color="#FFFFFF"/><stop offset="1" stop-color="#D4D2CA"/></linearGradient></defs>
 <rect x="1.5" y="1.5" width="15" height="15" fill="url(#wd)" stroke="#9A9A94" stroke-width="1"/>
 <path d="M3.5 4.5h2.4l.4 6 2.4-6h1.8l.4 6 2.4-6h2.2l-3.6 9h-2l-.4-5.5-2.2 5.5h-2z" fill="#7C7C78"/>
</svg>
<svg class="a" style="left:463px;top:70px" width="8" height="5"><path d="M0.5 0.5h6l-3 3.5z" fill="#000"/></svg>
<!-- sticky -->
<svg class="a" style="left:478px;top:65px" width="16" height="16" viewBox="0 0 16 16">
 <defs><linearGradient id="sn" x1="0" y1="0" x2="0" y2="1"><stop offset="0" stop-color="#FFF3A8"/><stop offset="1" stop-color="#F8D44A"/></linearGradient></defs>
 <path d="M1.5 1.5h13v10l-3 3h-10z" fill="url(#sn)" stroke="#D8A82A" stroke-width="1"/>
 <path d="M14.5 11.5h-3v3" fill="none" stroke="#D8A82A" stroke-width="1"/>
</svg>
<!-- globe -->
<svg class="a" style="left:525px;top:64px" width="18" height="18" viewBox="0 0 18 18">
 <defs><radialGradient id="gl" cx="62%" cy="62%" r="85%"><stop offset="0" stop-color="#B4E4FC"/><stop offset="0.45" stop-color="#5CB8F6"/><stop offset="0.8" stop-color="#2C86DC"/><stop offset="1" stop-color="#145AB4"/></radialGradient></defs>
 <circle cx="8.8" cy="8.8" r="8" fill="url(#gl)"/>
 <path d="M1.5 9.5A7.5 7.5 0 0 1 9 1.3" fill="none" stroke="#0F4CA8" stroke-width="1.6"/>
 <ellipse cx="9.3" cy="8.8" rx="5" ry="4.6" fill="none" stroke="#EAF6FF" stroke-width="0.9"/>
</svg>
<!-- fox -->
<svg class="a" style="left:549px;top:64px" width="19" height="17" viewBox="0 0 19 17">
 <path d="M1.5 2.5L4.5 1.5L9 5.5L13.5 9L17 10.5L15.5 14L9.5 15.5L3 15L1.5 9z" fill="#E6A83A"/>
 <path d="M1.5 6L5.5 7.5L8 15.5L3 15L1.5 9z" fill="#E4E4EA"/>
 <path d="M1 1.5L4 0.8L5 4.5L2 5z" fill="#7A6458"/>
 <circle cx="17" cy="11.5" r="1.3" fill="#6E6E6E"/>
 <circle cx="7" cy="6" r="0.8" fill="#E04020"/><circle cx="11" cy="8.5" r="0.8" fill="#30A030"/><circle cx="9" cy="10" r="0.8" fill="#E04020"/>
</svg>
<!-- clipboard -->
<svg class="a" style="left:573px;top:64px" width="18" height="18" viewBox="0 0 18 18">
 <rect x="1.5" y="2.5" width="8" height="13.5" fill="#6A88DA" stroke="#4A64B8" stroke-width="1"/>
 <path d="M3 5h5M3 8h5M3 11h5M3 14h5" stroke="#D8E4FA" stroke-width="1"/>
 <rect x="8.5" y="2.5" width="6" height="12.5" fill="#E8BE6A"/>
 <path d="M9 5h5M9 14h4" stroke="#FFF0C8" stroke-width="1"/>
 <path d="M12.5 12.5l4 3.5" stroke="#E09A30" stroke-width="2.6"/>
 <circle cx="10.5" cy="10" r="3.8" fill="#CDEAFC" stroke="#7090C0" stroke-width="0.9"/>
</svg>
<!-- binary -->
<svg class="a" style="left:597px;top:64px" width="18" height="18" viewBox="0 0 18 18"><path d="M0.8999999999999999 2.5L2.5 0.8999999999999999L4.1 2.5L2.5 4.1z" fill="none" stroke="#000" stroke-width="1"/><rect x="5.4" y="0.8999999999999999" width="1.3" height="3.2" fill="#000"/><path d="M7.9 2.5L9.5 0.8999999999999999L11.1 2.5L9.5 4.1z" fill="none" stroke="#000" stroke-width="1"/><rect x="12.4" y="0.8999999999999999" width="1.3" height="3.2" fill="#000"/><path d="M14.4 2.5L16 0.8999999999999999L17.6 2.5L16 4.1z" fill="none" stroke="#000" stroke-width="1"/><rect x="1.9" y="4.9" width="1.3" height="3.2" fill="#000"/><path d="M3.9 6.5L5.5 4.9L7.1 6.5L5.5 8.1z" fill="none" stroke="#000" stroke-width="1"/><rect x="8.4" y="4.9" width="1.3" height="3.2" fill="#000"/><path d="M0.8999999999999999 10.5L2.5 8.9L4.1 10.5L2.5 12.1z" fill="none" stroke="#000" stroke-width="1"/><rect x="5.4" y="8.9" width="1.3" height="3.2" fill="#000"/><path d="M7.9 10.5L9.5 8.9L11.1 10.5L9.5 12.1z" fill="none" stroke="#000" stroke-width="1"/><rect x="1.9" y="12.9" width="1.3" height="3.2" fill="#000"/><path d="M3.9 14.5L5.5 12.9L7.1 14.5L5.5 16.1z" fill="none" stroke="#000" stroke-width="1"/><rect x="13.4" y="12.9" width="1.3" height="3.2" fill="#000"/><rect x="15.8" y="14" width="1.2" height="1.2" fill="#000"/><path d="M12 4.2L16.8 4.6L14.2 8.2L16.8 8.6L9.8 16.5L11.6 11.2L9.4 10.8z" fill="#F8E818" stroke="#000" stroke-width="1"/></svg>

<!-- address -->
<div class="t tah" style="left:16px;top:95.7px;color:#7A7868;letter-spacing:-0.3px">A<u>d</u>dress</div>
<div class="a" style="left:59px;top:90px;width:725px;height:22px;background:#fff;border:1px solid #7F9DB9"></div>
<svg class="a" style="left:62px;top:93px" width="20" height="18" viewBox="0 0 20 18">
 <path d="M3.5 0.5h8.5l3 3v12h-11.5z" fill="#F2F0E4" stroke="#6E6A5A" stroke-width="1"/>
 <path d="M12 0.5v3h3" fill="none" stroke="#6E6A5A" stroke-width="0.8"/>
 <path d="M0.40000000000000036 12.2C-0.5999999999999996 9 2 4 7 2.8" fill="none" stroke="#E8A830" stroke-width="1.2"/>
 <path d="M1.5999999999999999 8.2H8.7A3.7 3.7 0 1 0 7.999999999999999 10.4" fill="none" stroke="#1E62D6" stroke-width="2.1"/>
 <path d="M9.7 5l1.5-1.5" stroke="#3AA0F0" stroke-width="1.2"/>
</svg>
<div class="t tah" style="left:81.5px;top:95.7px;letter-spacing:-0.1px">http://localhost:2296/ASPNET_Data_Tutorial_55_CS/BinaryData/DisplayOrDownloadData.aspx</div>
<div class="a" style="left:766px;top:92px;width:16px;height:18px;border-radius:2px;background:linear-gradient(135deg,#D4E2FC,#B6CDF8 60%,#A8C2F4);border:1px solid #C4D4F4"></div>
<svg class="a" style="left:766px;top:92px" width="16" height="18"><path d="M4.5 7.5l3.5 3.5 3.5-3.5" stroke="#4D6185" stroke-width="2" fill="none"/></svg>
<div class="a" style="left:789px;top:92px;width:19px;height:19px;border-radius:2px;background:linear-gradient(135deg,#5CC65A,#2E9A2E 55%,#1F7F22);border:1px solid #2A7A2A"></div>
<svg class="a" style="left:789px;top:92px" width="19" height="19"><path d="M4 9.5h9M9 5l4.5 4.5L9 14" stroke="#fff" stroke-width="2.2" fill="none"/></svg>
<div class="t tah" style="left:812px;top:95.7px">Go</div>

<!-- scrollbar -->
<div class="a" style="left:822px;top:117px;width:17px;height:370px;background:linear-gradient(90deg,#EEEDE5,#FDFDFA 60%,#F3F1EC)"></div>
<div class="a" style="left:823px;top:118px;width:15px;height:16px;border-radius:2px;background:linear-gradient(135deg,#DCE6FC,#BCD0F8 60%,#B0C6F4);border:1px solid #B4C8F4"></div>
<svg class="a" style="left:823px;top:118px" width="15" height="16"><path d="M3.5 9.5l4-4 4 4" stroke="#4D6185" stroke-width="2" fill="none"/></svg>
<div class="a" style="left:823px;top:135px;width:15px;height:38px;border-radius:2px;background:linear-gradient(90deg,#CAD8FA,#BCCFF8 50%,#B2C8F6);border:1px solid #A8BEF0"></div>
<svg class="a" style="left:823px;top:135px" width="15" height="38"><path d="M4 15.5h7M4 17.5h7M4 19.5h7M4 21.5h7" stroke="#EEF4FE" stroke-width="1"/><path d="M5 16.5h7M5 18.5h7M5 20.5h7M5 22.5h7" stroke="#8CA8E8" stroke-width="1"/></svg>
<div class="a" style="left:823px;top:471px;width:15px;height:16px;border-radius:2px;background:linear-gradient(135deg,#DCE6FC,#BCD0F8 60%,#B0C6F4);border:1px solid #B4C8F4"></div>
<svg class="a" style="left:823px;top:471px" width="15" height="16"><path d="M3.5 6l4 4 4-4" stroke="#4D6185" stroke-width="2" fill="none"/></svg>
<div class="a" style="left:839px;top:116px;width:2px;height:372px;background:linear-gradient(90deg,#F4F2E8,#FFFFFF)"></div>

<!-- status bar -->
<svg class="a" style="left:6px;top:493px" width="20" height="18" viewBox="0 0 20 18">
 <path d="M3.5 0.5h8.5l3 3v12h-11.5z" fill="#DCE8FA" stroke="#6A7CA8" stroke-width="1"/>
 <path d="M12 0.5v3h3" fill="none" stroke="#6A7CA8" stroke-width="0.8"/>
 <path d="M0.9000000000000004 13.2C-0.09999999999999964 10 2.5 5 7.5 3.8" fill="none" stroke="#E8A830" stroke-width="1.2"/>
 <path d="M2.0999999999999996 9.2H9.2A3.7 3.7 0 1 0 8.5 11.4" fill="none" stroke="#2A8EEA" stroke-width="2.1"/>
 <path d="M10.2 6l1.5-1.5" stroke="#3AA0F0" stroke-width="1.2"/>
</svg>
<div class="a" style="left:565px;top:493px;width:1px;height:17px;background:#C8C4B2"></div><div class="a" style="left:566px;top:493px;width:1px;height:17px;background:#fff"></div>
<div class="a" style="left:589px;top:493px;width:1px;height:17px;background:#C8C4B2"></div><div class="a" style="left:590px;top:493px;width:1px;height:17px;background:#fff"></div>
<div class="a" style="left:613px;top:493px;width:1px;height:17px;background:#C8C4B2"></div><div class="a" style="left:614px;top:493px;width:1px;height:17px;background:#fff"></div>
<div class="a" style="left:637px;top:493px;width:1px;height:17px;background:#C8C4B2"></div><div class="a" style="left:638px;top:493px;width:1px;height:17px;background:#fff"></div>
<div class="a" style="left:661px;top:493px;width:1px;height:17px;background:#C8C4B2"></div><div class="a" style="left:662px;top:493px;width:1px;height:17px;background:#fff"></div>
<div class="a" style="left:685px;top:493px;width:1px;height:17px;background:#C8C4B2"></div><div class="a" style="left:686px;top:493px;width:1px;height:17px;background:#fff"></div>
<svg class="a" style="left:690px;top:492px" width="18" height="18" viewBox="0 0 18 18">
 <circle cx="5.5" cy="6.5" r="5" fill="#2A7AD8"/>
 <path d="M2 4c2-2 5-2 6 0l-2 3-3-1z" fill="#3AB040"/>
 <rect x="7" y="2" width="9" height="9" rx="1" fill="#7CC4F8" stroke="#5A7CB8" stroke-width="1"/>
 <path d="M8 12h7l1.5 4h-10z" fill="#D8D8E8" stroke="#8A8AA8" stroke-width="0.8"/>
</svg>
<div class="t tah" style="left:710px;top:495.7px;letter-spacing:-0.1px">Local intranet</div>
<svg class="a" style="left:828px;top:499px" width="12" height="12"><g fill="#FFFFFF"><rect x="10" y="2" width="2" height="2"/><rect x="6" y="6" width="2" height="2"/><rect x="10" y="6" width="2" height="2"/><rect x="2" y="10" width="2" height="2"/><rect x="6" y="10" width="2" height="2"/><rect x="10" y="10" width="2" height="2"/></g><g fill="#A9A596"><rect x="9" y="1" width="2" height="2"/><rect x="5" y="5" width="2" height="2"/><rect x="9" y="5" width="2" height="2"/><rect x="1" y="9" width="2" height="2"/><rect x="5" y="9" width="2" height="2"/><rect x="9" y="9" width="2" height="2"/></g></svg>


</body></html>
